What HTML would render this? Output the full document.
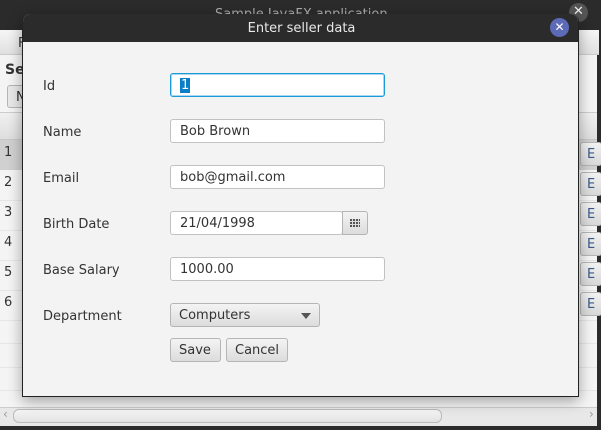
<!DOCTYPE html>
<html><head><style>
*{box-sizing:border-box;margin:0;padding:0}
body{width:601px;height:430px;overflow:hidden;position:relative;background:#2b2b2b;font-family:"DejaVu Sans","Liberation Sans",sans-serif;font-size:13px;color:#333}
.a{position:absolute}
.win{left:0;top:30px;width:599px;height:400px;background:#f4f4f4;border-right:2px solid #2b2b2b}
.tf{position:absolute;left:170px;width:215px;height:24px;background:#fff;border:1px solid #c2c2c2;border-radius:3px;padding:4px 0 0 9px;font-size:13px;color:#333}
.lbl{position:absolute;left:43px;font-size:13px;color:#333}
.btn{position:absolute;height:24px;border:1px solid #b5b5b5;border-radius:3px;background:linear-gradient(#f4f4f4,#dcdcdc);font-size:13px;padding:4px 0 0 8px;color:#333}
.eb{position:absolute;left:580px;width:22px;height:24px;border:1px solid #b5b5b5;border-radius:3px;background:linear-gradient(#f2f2f2,#d8d8d8);padding:4px 0 0 6px;color:#3a5a88;font-size:13px}
</style></head><body>
<div class="a" style="left:0;top:0;width:601px;height:30px;background:#2b2b2b;border-radius:8px 8px 0 0"></div>
<div class="a" style="left:215px;top:7px;color:#aaa;font-size:13px">Sample JavaFX application</div>
<div class="a" style="left:569px;top:3px;width:19px;height:19px;border-radius:50%;background:#555;color:#eee;font-size:13px;text-align:center;line-height:18px">✕</div>
<div class="a win">
 <div class="a" style="left:0;top:0;width:599px;height:25px;background:linear-gradient(#f6f6f6,#e0e0e0);border-bottom:1px solid #ccc"></div>
 <div class="a" style="left:18px;top:6px">F</div>
 <div class="a" style="left:5px;top:32px;font-weight:bold;font-size:14px">Se</div>
 <div class="a" style="left:7px;top:55px;width:40px;height:23px;border:1px solid #b5b5b5;border-radius:3px;background:#e8e8e8;padding:4px 0 0 8px">N</div>
 <div class="a" style="left:0;top:82px;width:597px;height:28px;background:linear-gradient(#f0f0f0,#dedede);border-top:1px solid #ccc;border-bottom:1px solid #c8c8c8"></div>
 <div class="a" style="left:0;top:110px;width:597px;height:30px;background:#d0d0d0"></div>
 <div class="a" style="left:4px;top:115px">1</div>
 <div class="a" style="left:4px;top:145px">2</div>
 <div class="a" style="left:4px;top:175px">3</div>
 <div class="a" style="left:4px;top:205px">4</div>
 <div class="a" style="left:4px;top:235px">5</div>
 <div class="a" style="left:4px;top:265px">6</div>
 <div class="a" style="left:0;top:170px;width:597px;border-top:1px solid #e6e6e6"></div>
 <div class="a" style="left:0;top:200px;width:597px;border-top:1px solid #e6e6e6"></div>
 <div class="a" style="left:0;top:230px;width:597px;border-top:1px solid #e6e6e6"></div>
 <div class="a" style="left:0;top:260px;width:597px;border-top:1px solid #e6e6e6"></div>
 <div class="a" style="left:0;top:290px;width:597px;border-top:1px solid #e6e6e6"></div>
 <div class="a" style="left:0;top:313px;width:597px;border-top:1px solid #e6e6e6"></div>
 <div class="a" style="left:0;top:337px;width:597px;border-top:1px solid #e6e6e6"></div>
 <div class="a" style="left:0;top:360px;width:597px;border-top:1px solid #e6e6e6"></div>
 <div class="a" style="left:0;top:377px;width:597px;height:19px;background:#e8e8e8;border-top:1px solid #ccc"></div>
 <div class="a" style="left:13px;top:379px;width:429px;height:14px;border:1px solid #bbb;border-radius:6px;background:linear-gradient(#f6f6f6,#e2e2e2)"></div>
 <div class="a" style="left:3px;top:377px;color:#999;font-size:12px">‹</div>
 <div class="a" style="left:589px;top:377px;color:#999;font-size:12px">›</div>
 <div class="a" style="left:0;top:396px;width:599px;height:4px;background:#2b2b2b"></div>
</div>
<div class="eb" style="top:142px">E</div>
<div class="eb" style="top:172px">E</div>
<div class="eb" style="top:202px">E</div>
<div class="eb" style="top:232px">E</div>
<div class="eb" style="top:262px">E</div>
<div class="eb" style="top:292px">E</div>

<div class="a" style="left:22px;top:14px;width:557px;height:383px;background:#f3f3f3;border:1px solid #222;border-top:none;border-radius:8px 8px 0 0;box-shadow:0 4px 14px rgba(0,0,0,.35);overflow:hidden">
 <div class="a" style="left:0;top:0;width:557px;height:28px;background:#2b2b2b"></div>
 <div class="a" style="left:0;top:7px;width:557px;text-align:center;color:#e8e8e8;font-size:13px">Enter seller data</div>
 <div class="a" style="left:527px;top:4px;width:19px;height:19px;border-radius:50%;background:#5c6bb8;color:#fff;font-size:12px;text-align:center;line-height:19px">✕</div>
</div>
<div class="lbl" style="top:79px">Id</div>
<div class="lbl" style="top:125px">Name</div>
<div class="lbl" style="top:171px">Email</div>
<div class="lbl" style="top:217px">Birth Date</div>
<div class="lbl" style="top:263px">Base Salary</div>
<div class="lbl" style="top:309px">Department</div>
<div class="tf" style="top:73px;border:1px solid #1b9ad8;box-shadow:inset 0 0 0 1px #a9d8f2"><span style="background:#0b7fc6;color:#fff;padding:0 1px">1</span></div>
<div class="tf" style="top:119px">Bob Brown</div>
<div class="tf" style="top:165px">bob@gmail.com</div>
<div class="tf" style="top:211px;width:173px">21/04/1998</div>
<div class="a" style="left:342px;top:211px;width:26px;height:24px;border:1px solid #b5b5b5;border-radius:0 3px 3px 0;background:linear-gradient(#f4f4f4,#dcdcdc)">
 <div class="a" style="left:7px;top:7px;width:10px;height:8px;background:#555;background-image:repeating-linear-gradient(90deg,transparent 0 2px,#ddd 2px 3px),repeating-linear-gradient(0deg,transparent 0 2px,#ddd 2px 3px)"></div>
</div>
<div class="tf" style="top:257px">1000.00</div>
<div class="btn" style="left:170px;top:303px;width:150px">Computers<span style="position:absolute;left:130px;top:9px;border-left:5px solid transparent;border-right:5px solid transparent;border-top:6px solid #555"></span></div>
<div class="btn" style="left:170px;top:338px;width:51px">Save</div>
<div class="btn" style="left:226px;top:338px;width:62px">Cancel</div>
</body></html>
